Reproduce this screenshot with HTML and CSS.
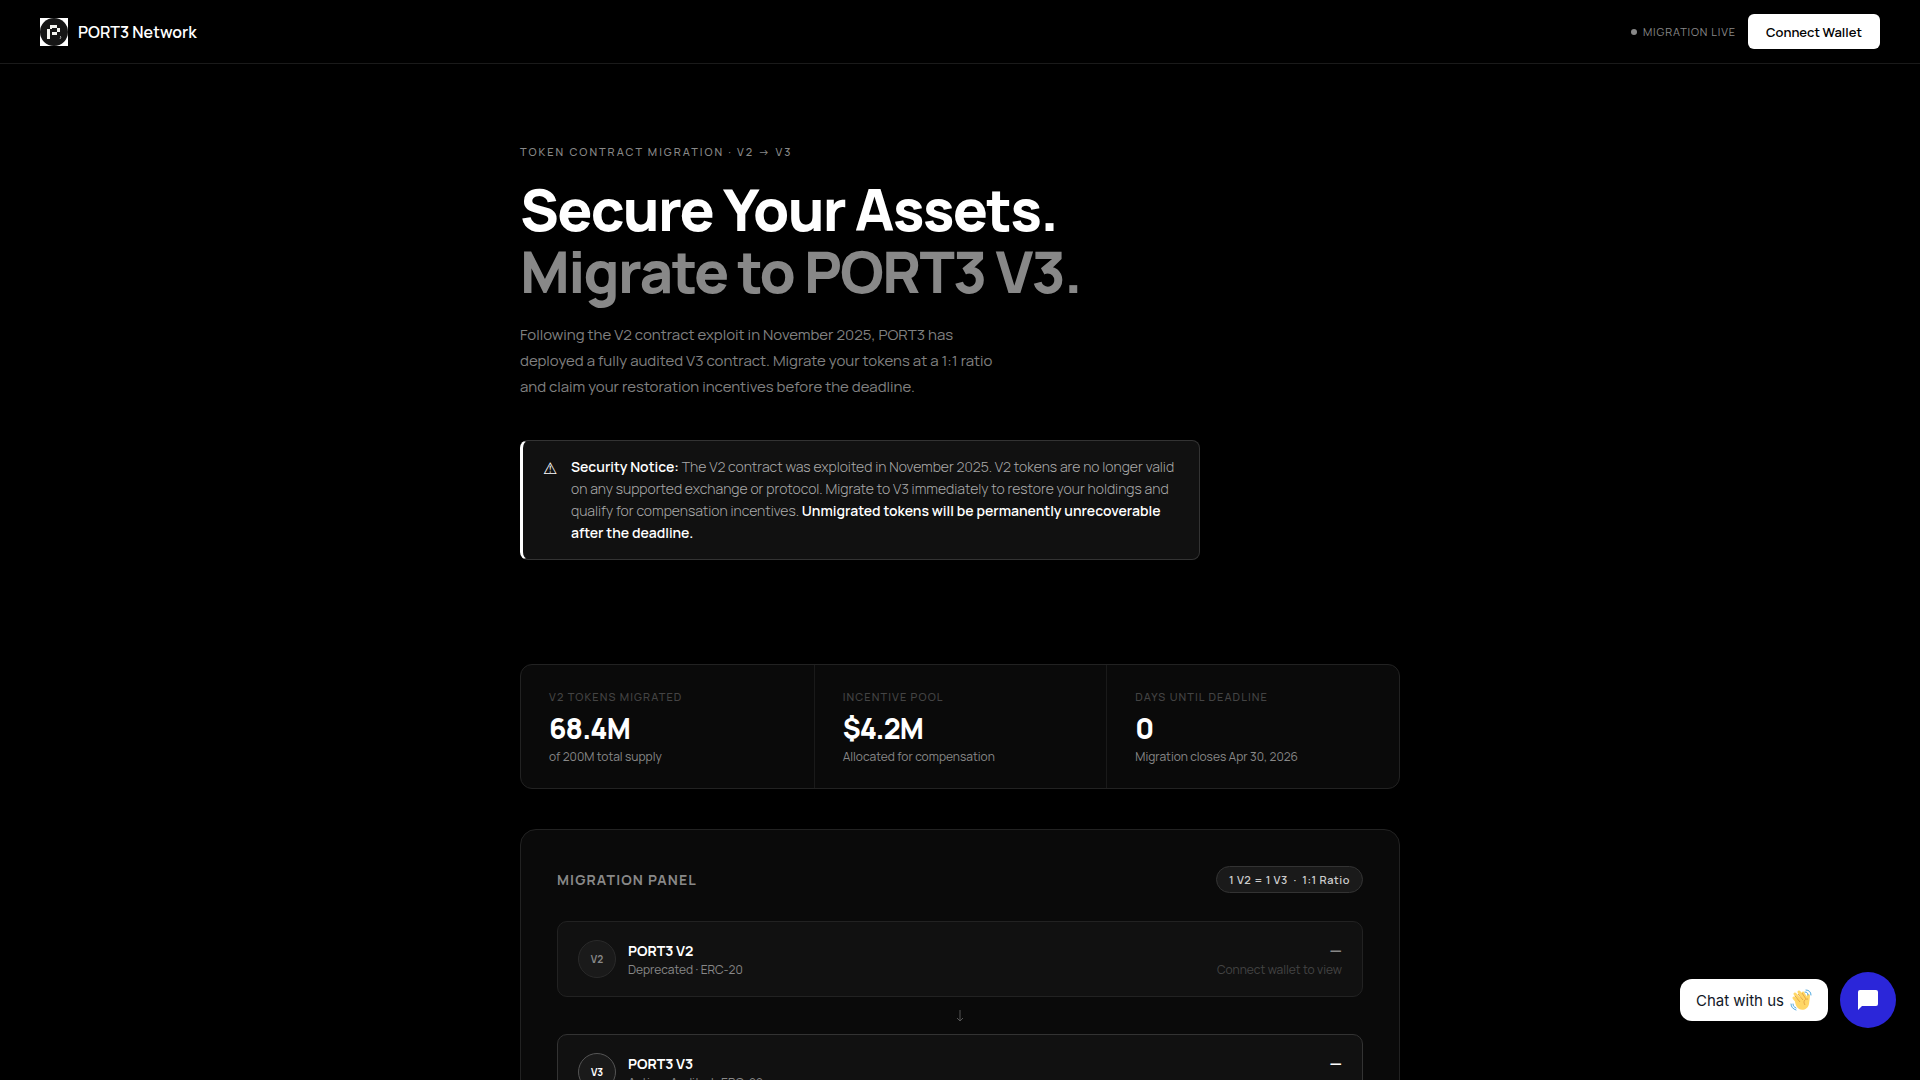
FILE: index.html
```html
<!DOCTYPE html>
<html lang="en">
<head>
    <meta charset="UTF-8">
    <meta name="viewport" content="width=device-width, initial-scale=1.0">
    <title>PORT3 Network</title>
    <link rel="stylesheet" href="styles.css">
</head>
<body>
    <header class="navbar">
        <div class="brand">
            <svg class="brand-logo" viewBox="0 0 28 28" aria-hidden="true">
                <rect width="28" height="28" fill="#fff"/>
                <circle cx="14" cy="14" r="14" fill="#151515"/>
                <path fill="#f4f4f0" d="M10 7h7v3h-7zM7 11h3v10H7zM17 10h3v4h-3zM12 14h5v3h-5zM10 10h2v1h-2z"/>
                <path d="M20 18l1 1-1 2" fill="none" stroke="#999" stroke-width="1"/>
            </svg>
            <span>PORT3 Network</span>
        </div>
        <div class="nav-right">
            <span class="status"><span class="status-dot"></span>MIGRATION LIVE</span>
            <button type="button" class="connect-btn">Connect Wallet</button>
        </div>
    </header>

    <main class="container">
        <section class="hero">
            <p class="eyebrow">TOKEN CONTRACT MIGRATION · V2 → V3</p>
            <h1>Secure Your Assets.<br><span class="muted">Migrate to PORT3 V3.</span></h1>
            <p class="intro">Following the V2 contract exploit in November 2025, PORT3 has<br>deployed a fully audited V3 contract. Migrate your tokens at a 1:1 ratio<br>and claim your restoration incentives before the deadline.</p>
            <div class="notice">
                <span class="notice-icon">⚠</span>
                <p><strong>Security Notice:</strong> The V2 contract was exploited in November 2025. V2 tokens are no longer valid<br>on any supported exchange or protocol. Migrate to V3 immediately to restore your holdings and<br>qualify for compensation incentives. <strong>Unmigrated tokens will be permanently unrecoverable<br>after the deadline.</strong></p>
            </div>
        </section>

        <section class="stats">
            <div class="stat">
                <div class="stat-label">V2 TOKENS MIGRATED</div>
                <div class="stat-value">68.4M</div>
                <div class="stat-sub">of 200M total supply</div>
            </div>
            <div class="stat">
                <div class="stat-label">INCENTIVE POOL</div>
                <div class="stat-value">$4.2M</div>
                <div class="stat-sub">Allocated for compensation</div>
            </div>
            <div class="stat">
                <div class="stat-label">DAYS UNTIL DEADLINE</div>
                <div class="stat-value">0</div>
                <div class="stat-sub">Migration closes Apr 30, 2026</div>
            </div>
        </section>

        <section class="panel">
            <div class="panel-head">
                <h2>MIGRATION PANEL</h2>
                <span class="ratio">1 V2 = 1 V3 &nbsp;·&nbsp; 1:1 Ratio</span>
            </div>

            <div class="token">
                <span class="token-badge">V2</span>
                <div class="token-info">
                    <div class="token-name">PORT3 V2</div>
                    <div class="token-sub">Deprecated · ERC-20</div>
                </div>
                <div class="token-balance">
                    <div class="amount">—</div>
                    <div class="hint">Connect wallet to view</div>
                </div>
            </div>

            <div class="arrow">
                <svg width="8" height="12" viewBox="0 0 8 12" fill="none" stroke="#555" aria-hidden="true">
                    <path d="M4 0v11M1 8l3 3 3-3"/>
                </svg>
            </div>

            <div class="token token-new">
                <span class="token-badge">V3</span>
                <div class="token-info">
                    <div class="token-name">PORT3 V3</div>
                    <div class="token-sub">Active · Audited · ERC-20</div>
                </div>
                <div class="token-balance">
                    <div class="amount">—</div>
                    <div class="hint">&nbsp;</div>
                </div>
            </div>
        </section>
    </main>

    <div class="chat">
        <div class="chat-label">
            <span>Chat with us</span>
            <svg width="22" height="22" viewBox="0 0 22 22" aria-hidden="true">
                <g fill="none" stroke="#ffd766" stroke-linecap="round" stroke-width="3">
                    <path d="M4 9l6 7M5 5l7 8M9 3l6 8M13 4l4 7"/>
                </g>
                <path fill="#ffd766" d="M5 11l3-3 8 1 1-3c1-2 3-1 3 1l-1 8c-1 5-6 7-10 5-3-2-4-5-4-9z"/>
                <path d="M5 7l5 6M8 5l5 6M12 4l4 6M18 10c-4 0-5 3-3 6" fill="none" stroke="#e5a646"/>
                <path d="M15 3c2 0 3 1 3 3M16 1c3 0 5 2 5 5M1 15c0 3 2 5 5 6M3 15c0 2 1 3 3 4" fill="none" stroke="#4ba8e0" stroke-linecap="round"/>
            </svg>
        </div>
        <button type="button" class="chat-btn" aria-label="Open chat">
            <svg width="20" height="20" viewBox="0 0 20 20" aria-hidden="true">
                <path fill="#fff" d="M2 0h16a2 2 0 0 1 2 2v12a2 2 0 0 1-2 2H4l-4 4V2a2 2 0 0 1 2-2z"/>
            </svg>
        </button>
    </div>
</body>
</html>
```
FILE: styles.css
```css
* {
    box-sizing: border-box;
    margin: 0;
    padding: 0;
}

body {
    font-family: 'Manrope', 'Inter', sans-serif;
    background-color: #000;
    color: #fff;
}

button {
    font-family: inherit;
    border: none;
    cursor: pointer;
}

/* Navbar */
.navbar {
    display: flex;
    align-items: center;
    justify-content: space-between;
    height: 64px;
    padding: 0 40px;
    border-bottom: 1px solid #1a1a1a;
}

.brand {
    display: flex;
    align-items: center;
    gap: 10px;
    font-size: 16px;
    font-weight: 600;
}

.brand-logo {
    width: 28px;
    height: 28px;
}

.nav-right {
    display: flex;
    align-items: center;
    gap: 12px;
}

.status {
    display: flex;
    align-items: center;
    gap: 6px;
    font-size: 11px;
    letter-spacing: 0.08em;
    color: #888;
}

.status-dot {
    width: 6px;
    height: 6px;
    border-radius: 50%;
    background-color: #888;
}

.connect-btn {
    height: 35px;
    padding: 0 18px;
    border-radius: 6px;
    background-color: #fff;
    color: #000;
    font-size: 13px;
    font-weight: 600;
}

/* Hero */
.container {
    max-width: 880px;
    margin: 0 auto;
    padding: 80px 0;
}

.eyebrow {
    font-size: 11px;
    font-weight: 500;
    line-height: 16px;
    letter-spacing: 0.18em;
    color: #888;
}

h1 {
    margin-top: 18px;
    font-size: 58px;
    font-weight: 800;
    line-height: 62px;
    letter-spacing: -0.03em;
}

.muted {
    color: #888;
}

.intro {
    margin-top: 20px;
    font-size: 15px;
    line-height: 26px;
    color: #808080;
}

.notice {
    display: flex;
    gap: 14px;
    max-width: 680px;
    margin-top: 40px;
    padding: 15px 20px;
    border: 1px solid #333;
    border-left: 3px solid #fff;
    border-radius: 8px;
    background-color: #111;
    font-size: 14px;
    font-weight: 300;
    line-height: 22px;
    color: #aaa;
}

.notice strong {
    font-weight: 600;
    color: #fff;
}

.notice-icon {
    width: 14px;
    font-family: 'DejaVu Sans', sans-serif;
    font-size: 16px;
    line-height: 26px;
    color: #fff;
}

/* Stats */
.stats {
    display: grid;
    grid-template-columns: repeat(3, 1fr);
    margin-top: 104px;
    border: 1px solid #222;
    border-radius: 12px;
    background-color: #0a0a0a;
}

.stat {
    padding: 24px 28px;
}

.stat + .stat {
    border-left: 1px solid #1a1a1a;
}

.stat-label {
    font-size: 11px;
    font-weight: 500;
    line-height: 16px;
    letter-spacing: 0.1em;
    color: #444;
}

.stat-value {
    margin: 6px 0 4px;
    font-size: 28px;
    font-weight: 800;
    line-height: 34px;
    letter-spacing: -0.03em;
}

.stat-sub {
    font-size: 12px;
    line-height: 15px;
    color: #888;
}

/* Migration panel */
.panel {
    margin-top: 40px;
    padding: 36px;
    border: 1px solid #222;
    border-radius: 16px;
    background-color: #0a0a0a;
}

.panel-head {
    display: flex;
    align-items: center;
    justify-content: space-between;
    margin-bottom: 28px;
}

h2 {
    font-size: 14px;
    font-weight: 700;
    letter-spacing: 0.08em;
    color: #888;
}

.ratio {
    padding: 0 12px;
    border: 1px solid #333;
    border-radius: 20px;
    background-color: #1a1a1a;
    font-size: 11px;
    font-weight: 600;
    line-height: 25px;
    letter-spacing: 0.05em;
    color: #ccc;
}

.token {
    display: flex;
    align-items: center;
    gap: 12px;
    padding: 17px 20px;
    border: 1px solid #222;
    border-radius: 10px;
    background-color: #111;
}

.token-new {
    border-color: #333;
}

.token-badge {
    display: flex;
    align-items: center;
    justify-content: center;
    width: 38px;
    height: 38px;
    border: 1px solid #2a2a2a;
    border-radius: 50%;
    background-color: #1a1a1a;
    font-size: 10px;
    font-weight: 700;
    color: #888;
}

.token-new .token-badge {
    border-color: #555;
    color: #fff;
}

.token-name {
    font-size: 14px;
    font-weight: 700;
    line-height: 22px;
}

.token-sub {
    font-size: 12px;
    line-height: 16px;
    color: #888;
}

.token-balance {
    margin-left: auto;
    text-align: right;
}

.amount {
    font-size: 16px;
    font-weight: 700;
    line-height: 22px;
    color: #888;
}

.token-new .amount {
    color: #fff;
}

.hint {
    font-size: 12px;
    line-height: 18px;
    color: #444;
}

.arrow {
    display: flex;
    align-items: center;
    justify-content: center;
    height: 37px;
}

/* Chat widget */
.chat {
    position: fixed;
    right: 24px;
    bottom: 52px;
    display: flex;
    align-items: center;
    gap: 12px;
}

.chat-label {
    display: flex;
    align-items: center;
    gap: 6px;
    height: 42px;
    padding: 0 16px;
    border-radius: 12px;
    background-color: #fff;
    color: #111827;
    font-family: 'Inter', sans-serif;
    font-size: 15px;
}

.chat-btn {
    display: flex;
    align-items: center;
    justify-content: center;
    width: 56px;
    height: 56px;
    border-radius: 50%;
    background-color: #2b26d9;
}
```
